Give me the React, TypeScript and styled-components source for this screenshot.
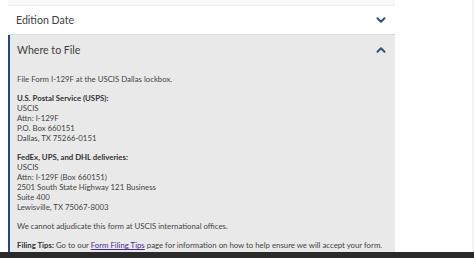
import styled, { createGlobalStyle } from "styled-components";

const Global = createGlobalStyle`
  html, body {
    margin: 0;
    padding: 0;
    background: #ffffff;
  }
  body {
    font-family: Lato, "Open Sans", "Liberation Sans", sans-serif;
    color: #3b3b3b;
  }
`;

const Chevron = ({ up }: { up?: boolean }) => (
  <svg width="10" height="6" viewBox="0 0 10 6">
    <polyline
      points={up ? "1.5,4.8 5,1.3 8.5,4.8" : "1.5,1.2 5,4.7 8.5,1.2"}
      fill="none"
      stroke="#2a5584"
      strokeWidth="2"
      strokeLinecap="round"
      strokeLinejoin="round"
    />
  </svg>
);

const App = () => {
  return (
    <Page>
      <Global />
      <Top>
        <Column>
          <TopStrip />
          <ClosedHead>
            <HeadText>Edition Date</HeadText>
            <Chevron />
          </ClosedHead>
          <OpenPanel>
            <OpenHead>
              <HeadText>Where to File</HeadText>
              <Chevron up />
            </OpenHead>
            <Body>
              <Para>File Form I-129F at the USCIS Dallas lockbox.</Para>
              <Para>
                <b>U.S. Postal Service (USPS):</b>
                <br />
                USCIS
                <br />
                Attn: I-129F
                <br />
                P.O. Box 660151
                <br />
                Dallas, TX 75266-0151
              </Para>
              <Para>
                <b>FedEx, UPS, and DHL deliveries:</b>
                <br />
                USCIS
                <br />
                Attn: I-129F (Box 660151)
                <br />
                2501 South State Highway 121 Business
                <br />
                Suite 400
                <br />
                Lewisville, TX 75067-8003
              </Para>
              <Para>We cannot adjudicate this form at USCIS international offices.</Para>
              <Para>
                <b>Filing Tips:</b> Go to our <Link>Form Filing Tips</Link> page for
                information on how to help ensure we will accept your form.
              </Para>
            </Body>
          </OpenPanel>
        </Column>
        <Side />
      </Top>
      <Footer />
    </Page>
  );
};

const Page = styled.div`
  width: 474px;
  height: 258px;
  overflow: hidden;
  display: flex;
  flex-direction: column;
`;
const Top = styled.div`
  flex: 1;
  display: flex;
  min-height: 0;
`;
const Column = styled.div`
  width: 387px;
  margin-left: 8px;
  display: flex;
  flex-direction: column;
  min-height: 0;
`;
const TopStrip = styled.div`
  flex-shrink: 0;
  height: 5px;
  background: #f8f8f8;
  border-bottom: 1px solid #f0f0f0;
`;
const ClosedHead = styled.div`
  flex-shrink: 0;
  height: 28px;
  padding: 0 9px 0 8px;
  display: flex;
  justify-content: space-between;
  align-items: center;
  background: #ffffff;
  border-bottom: 1px solid #dcdcdc;
`;
const HeadText = styled.span`
  font-size: 10.6px;
  color: #404040;
`;
const OpenPanel = styled.div`
  flex: 1;
  min-height: 0;
  overflow: hidden;
  background: #e9e9e9;
  border-left: 2px solid #1f4b80;
`;
const OpenHead = styled.div`
  height: 30px;
  padding: 0 9px 0 7px;
  display: flex;
  justify-content: space-between;
  align-items: center;
`;
const Body = styled.div`
  padding: 9px 7px 0 7px;
  font-size: 7.8px;
  line-height: 10px;
  color: #444444;
  b {
    font-weight: 700;
    color: #333333;
  }
`;
const Para = styled.p`
  margin: 0 0 9px 0;
  &:last-child {
    margin-bottom: 0;
  }
`;
const Link = styled.a`
  color: #4c2c92;
  text-decoration: underline;
`;
const Side = styled.div`
  flex: 1;
  background: #ffffff;
  border-right: 2px solid #f2f2f2;
`;
const Footer = styled.div`
  flex-shrink: 0;
  height: 6px;
  background: #2a2a2a;
`;

export default App;
